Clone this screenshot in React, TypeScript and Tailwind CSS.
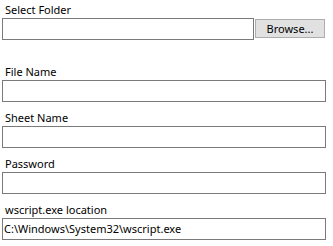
const font = { fontFamily: '"Noto Sans", "Liberation Sans", sans-serif' };

const Field = ({ label, value, className }: { label: string; value?: string; className?: string }) => {
  return (
    <div className={className}>
      <div className="h-4 pl-[3px] text-[11px] leading-4 text-black">{label}</div>
      <div className="h-[22px] w-[324px] border border-[#7a7a7a] bg-white pl-[1px] text-[11px] leading-5 text-black">
        {value}
      </div>
    </div>
  );
};

export default function App() {
  return (
    <div className="h-[246px] w-[333px] bg-white pl-[2px] pt-[2px]" style={font}>
      <div className="h-4 pl-[3px] text-[11px] leading-4 text-black">Select Folder</div>
      <div className="flex items-start">
        <div className="h-[22px] w-[252px] border border-[#7a7a7a] bg-white" />
        <button className="ml-[1px] mt-[1px] h-[19px] w-[70px] border border-[#adadad] bg-[#e1e1e1] text-[11px] leading-4 text-black">
          Browse...
        </button>
      </div>
      <Field className="mt-[24px]" label="File Name" />
      <Field className="mt-2" label="Sheet Name" />
      <Field className="mt-2" label="Password" />
      <Field className="mt-2" label="wscript.exe location" value="C:\Windows\System32\wscript.exe" />
    </div>
  );
}
